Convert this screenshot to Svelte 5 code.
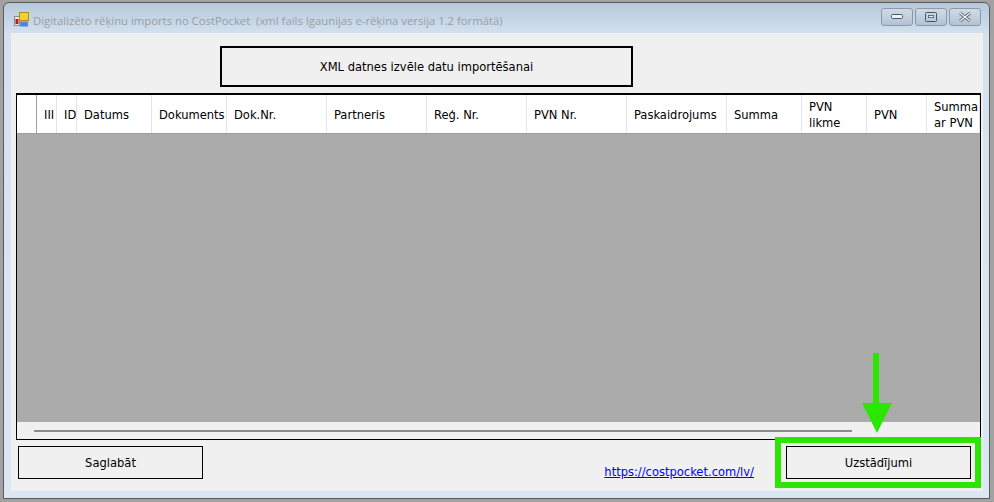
<script lang="ts">
	const columns = [
		{ label: 'III', width: 20 },
		{ label: 'ID', width: 20 },
		{ label: 'Datums', width: 75 },
		{ label: 'Dokuments', width: 75 },
		{ label: 'Dok.Nr.', width: 100 },
		{ label: 'Partneris', width: 100 },
		{ label: 'Reģ. Nr.', width: 100 },
		{ label: 'PVN Nr.', width: 100 },
		{ label: 'Paskaidrojums', width: 100 },
		{ label: 'Summa', width: 75 },
		{ label: 'PVN likme', width: 65 },
		{ label: 'PVN', width: 60 },
		{ label: 'Summa ar PVN', width: 53 }
	]
</script>

<div class="window">
	<header class="titlebar">
		<svg class="app-icon" viewBox="0 0 15 15" width="15" height="15" aria-hidden="true">
			<rect x="0.5" y="4.5" width="5" height="9" fill="#e8e8e8" stroke="#8a8a8a" />
			<rect x="1.5" y="7" width="3" height="5" fill="#c8141c" />
			<rect x="5.5" y="0.5" width="9" height="8" fill="#f7cf35" stroke="#b08a20" />
			<rect x="6" y="9.5" width="8" height="5" fill="#4f86d8" stroke="#8fb0e0" stroke-width="0.6" />
		</svg>
		<span class="title">Digitalizēto rēķinu imports no CostPocket&nbsp; (xml fails Igaunijas e-rēķina versija 1.2 formātā)</span>
		<div class="controls">
			<button class="ctl" aria-label="Minimize">
				<svg viewBox="0 0 12 6" width="12" height="6"><rect x="0.5" y="0.5" width="11" height="4" rx="1" fill="#eef1f5" stroke="#4d5560" /></svg>
			</button>
			<button class="ctl" aria-label="Maximize">
				<svg viewBox="0 0 12 10" width="12" height="10"><rect x="0.5" y="0.5" width="11" height="9" rx="1" fill="none" stroke="#4d5560" /><rect x="3.5" y="3.5" width="5" height="2" fill="#eef1f5" stroke="#4d5560" stroke-width="0.8" /></svg>
			</button>
			<button class="ctl" aria-label="Close">
				<svg viewBox="0 0 14 10" width="14" height="10"><path d="M2 1l10 8M12 1L2 9" stroke="#5a626d" stroke-width="3" /><path d="M2 1l10 8M12 1L2 9" stroke="#eef1f5" stroke-width="1.4" /></svg>
			</button>
		</div>
	</header>

	<main class="client">
		<div class="top-row">
			<button class="pick">XML datnes izvēle datu importēšanai</button>
		</div>

		<section class="table">
			<div class="head">
				<div class="row-header"></div>
				{#each columns as col}
					<div class="cell" style="width: {col.width}px">{col.label}</div>
				{/each}
			</div>
			<div class="rows"></div>
			<div class="scroll"><div class="thumb"></div></div>
		</section>

		<footer class="bottom">
			<button class="action">Saglabāt</button>
			<a class="link" href="https://costpocket.com/lv/">https://costpocket.com/lv/</a>
			<button class="action">Uzstādījumi</button>
		</footer>
	</main>

	<!-- annotation drawn on top of the screenshot -->
	<div class="highlight"></div>
	<svg class="arrow" viewBox="0 0 30 80" width="30" height="80" aria-hidden="true">
		<path d="M11 0h6v50h13L15 80 0 50h11z" fill="#2ae600" />
	</svg>
</div>

<style>
	:global(body) {
		background: #a2a2a2;
		font-family: 'DejaVu Sans', sans-serif;
	}

	.window {
		position: relative;
		box-sizing: border-box;
		width: 987px;
		height: 497px;
		margin: 2px 0 0 3px;
		padding: 0 6px 7px 7px;
		border: 1px solid #5a5a5a;
		border-radius: 6px 6px 0 0;
		background: linear-gradient(#b6c8da 0, #d4e2f0 32px, #dbe7f3 100%);
		font-stretch: condensed;
		font-size: 12.8px;
		color: #000;
	}

	.titlebar {
		display: flex;
		align-items: center;
		height: 30px;
		padding-left: 3px;
	}

	.app-icon {
		margin: 3px 4px 0 0;
	}

	.title {
		margin-top: 5px;
		font-family: 'Open Sans', sans-serif;
		font-stretch: normal;
		font-size: 11.3px;
		color: #9a9ea4;
		white-space: pre;
	}

	.controls {
		display: flex;
		gap: 2px;
		margin: -3px 2px 0 auto;
	}

	.ctl {
		display: flex;
		align-items: center;
		justify-content: center;
		width: 32px;
		height: 18px;
		padding: 0;
		border: 1px solid #8b99ab;
		border-radius: 3px;
		background: linear-gradient(#cfdbe7, #b3c3d4);
	}

	.client {
		display: flex;
		flex-direction: column;
		height: 458px;
		box-sizing: border-box;
		padding: 13px 2px 0 5px;
		background: #f0f0f0;
	}

	.top-row {
		display: flex;
		padding-left: 204px;
	}

	button {
		font: inherit;
		font-stretch: condensed;
		color: #000;
	}

	.pick {
		width: 413px;
		height: 41px;
		border: 2px solid #000;
		background: #f0f0f0;
	}

	.table {
		display: flex;
		flex-direction: column;
		width: 965px;
		height: 347px;
		box-sizing: border-box;
		margin-top: 6px;
		border: 1px solid #000;
		border-top-width: 2px;
	}

	.head {
		display: flex;
		height: 39px;
		box-sizing: border-box;
		background: #fff;
		border-bottom: 1px solid #a0a0a0;
		overflow: hidden;
		flex: none;
	}

	.row-header {
		flex: none;
		width: 20px;
		box-sizing: border-box;
		border-right: 1px solid #a0a0a0;
	}

	.cell {
		flex: none;
		display: flex;
		align-items: center;
		box-sizing: border-box;
		padding: 2px 4px 0 7px;
		border-right: 1px solid #e4e4e4;
		line-height: 16px;
		white-space: normal;
		overflow: hidden;
	}

	.rows {
		flex: 1;
		background: #ababab;
	}

	.scroll {
		flex: none;
		height: 17px;
		display: flex;
		align-items: center;
		padding-left: 17px;
	}

	.thumb {
		width: 818px;
		height: 2px;
		background: #8c8c8c;
	}

	.bottom {
		display: flex;
		align-items: flex-end;
		margin-top: 6px;
		padding: 0 10px 0 2px;
	}

	.action {
		width: 185px;
		height: 33px;
		border: 1px solid #000;
		background: #f0f0f0;
	}

	.link {
		margin: 0 32px 0 auto;
		color: #0000ff;
	}

	.highlight {
		position: absolute;
		left: 771px;
		top: 434px;
		width: 194px;
		height: 39px;
		border: 6px solid #2ae600;
	}

	.arrow {
		position: absolute;
		left: 858px;
		top: 350px;
	}
</style>
